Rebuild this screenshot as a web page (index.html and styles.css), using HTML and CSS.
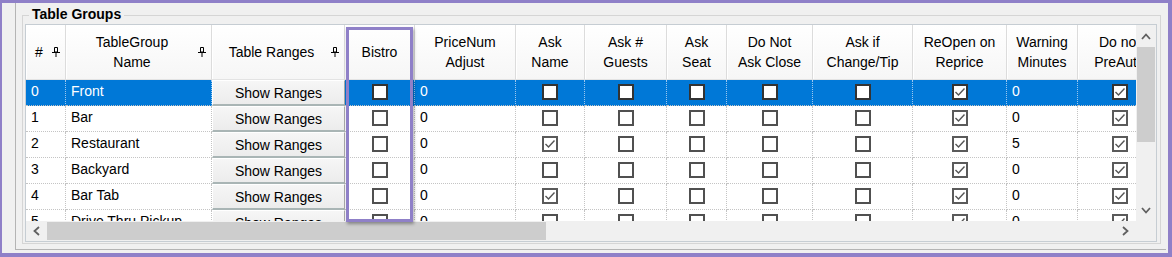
FILE: index.html
```html
<!DOCTYPE html>
<html>
<head>
<meta charset="utf-8">
<link rel="stylesheet" href="styles.css">
</head>
<body>
<div class="frame">
  <div class="panel">
    <div class="groupbox">
      <span class="gb-title">Table Groups</span>
      <div class="dgv">
        <div class="viewport">
          <div class="row cols header">
            <div class="hc"><span class="ht">#</span><svg class="pin" width="8" height="10" viewBox="0 0 8 10"><path d="M2.5 0.5h3v4.5h-3z M0 5.5h8 M4 5.5v4.5" stroke="#000" fill="none"/></svg></div>
            <div class="hc"><span class="ht">TableGroup<br>Name</span><svg class="pin" width="8" height="10" viewBox="0 0 8 10"><path d="M2.5 0.5h3v4.5h-3z M0 5.5h8 M4 5.5v4.5" stroke="#000" fill="none"/></svg></div>
            <div class="hc"><span class="ht">Table Ranges</span><svg class="pin" width="8" height="10" viewBox="0 0 8 10"><path d="M2.5 0.5h3v4.5h-3z M0 5.5h8 M4 5.5v4.5" stroke="#000" fill="none"/></svg></div>
            <div class="hc"><span class="ht">Bistro</span></div>
            <div class="hc"><span class="ht">PriceNum<br>Adjust</span></div>
            <div class="hc"><span class="ht">Ask<br>Name</span></div>
            <div class="hc"><span class="ht">Ask #<br>Guests</span></div>
            <div class="hc"><span class="ht">Ask<br>Seat</span></div>
            <div class="hc"><span class="ht">Do Not<br>Ask Close</span></div>
            <div class="hc"><span class="ht">Ask if<br>Change/Tip</span></div>
            <div class="hc"><span class="ht">ReOpen on<br>Reprice</span></div>
            <div class="hc"><span class="ht">Warning<br>Minutes</span></div>
            <div class="hc"><span class="ht">Do not<br>PreAuth</span></div>
          </div>

          <div class="row cols sel">
            <div class="c t">0</div><div class="c t">Front</div>
            <div class="c b"><div class="btn">Show Ranges</div></div>
            <div class="c k"><span class="cb"></span></div>
            <div class="c t">0</div>
            <div class="c k"><span class="cb"></span></div>
            <div class="c k"><span class="cb"></span></div>
            <div class="c k"><span class="cb"></span></div>
            <div class="c k"><span class="cb"></span></div>
            <div class="c k"><span class="cb"></span></div>
            <div class="c k"><span class="cb on"><svg width="12" height="12" viewBox="0 0 12 12"><path d="M1.5 6 L4.5 9 L10.5 2.5" stroke="#555" stroke-width="1.4" fill="none"/></svg></span></div>
            <div class="c t">0</div>
            <div class="c k"><span class="cb on"><svg width="12" height="12" viewBox="0 0 12 12"><path d="M1.5 6 L4.5 9 L10.5 2.5" stroke="#555" stroke-width="1.4" fill="none"/></svg></span></div>
          </div>

          <div class="row cols">
            <div class="c t">1</div><div class="c t">Bar</div>
            <div class="c b"><div class="btn">Show Ranges</div></div>
            <div class="c k"><span class="cb"></span></div>
            <div class="c t">0</div>
            <div class="c k"><span class="cb"></span></div>
            <div class="c k"><span class="cb"></span></div>
            <div class="c k"><span class="cb"></span></div>
            <div class="c k"><span class="cb"></span></div>
            <div class="c k"><span class="cb"></span></div>
            <div class="c k"><span class="cb on"><svg width="12" height="12" viewBox="0 0 12 12"><path d="M1.5 6 L4.5 9 L10.5 2.5" stroke="#555" stroke-width="1.4" fill="none"/></svg></span></div>
            <div class="c t">0</div>
            <div class="c k"><span class="cb on"><svg width="12" height="12" viewBox="0 0 12 12"><path d="M1.5 6 L4.5 9 L10.5 2.5" stroke="#555" stroke-width="1.4" fill="none"/></svg></span></div>
          </div>

          <div class="row cols">
            <div class="c t">2</div><div class="c t">Restaurant</div>
            <div class="c b"><div class="btn">Show Ranges</div></div>
            <div class="c k"><span class="cb"></span></div>
            <div class="c t">0</div>
            <div class="c k"><span class="cb on"><svg width="12" height="12" viewBox="0 0 12 12"><path d="M1.5 6 L4.5 9 L10.5 2.5" stroke="#555" stroke-width="1.4" fill="none"/></svg></span></div>
            <div class="c k"><span class="cb"></span></div>
            <div class="c k"><span class="cb"></span></div>
            <div class="c k"><span class="cb"></span></div>
            <div class="c k"><span class="cb"></span></div>
            <div class="c k"><span class="cb on"><svg width="12" height="12" viewBox="0 0 12 12"><path d="M1.5 6 L4.5 9 L10.5 2.5" stroke="#555" stroke-width="1.4" fill="none"/></svg></span></div>
            <div class="c t">5</div>
            <div class="c k"><span class="cb on"><svg width="12" height="12" viewBox="0 0 12 12"><path d="M1.5 6 L4.5 9 L10.5 2.5" stroke="#555" stroke-width="1.4" fill="none"/></svg></span></div>
          </div>

          <div class="row cols">
            <div class="c t">3</div><div class="c t">Backyard</div>
            <div class="c b"><div class="btn">Show Ranges</div></div>
            <div class="c k"><span class="cb"></span></div>
            <div class="c t">0</div>
            <div class="c k"><span class="cb"></span></div>
            <div class="c k"><span class="cb"></span></div>
            <div class="c k"><span class="cb"></span></div>
            <div class="c k"><span class="cb"></span></div>
            <div class="c k"><span class="cb"></span></div>
            <div class="c k"><span class="cb on"><svg width="12" height="12" viewBox="0 0 12 12"><path d="M1.5 6 L4.5 9 L10.5 2.5" stroke="#555" stroke-width="1.4" fill="none"/></svg></span></div>
            <div class="c t">0</div>
            <div class="c k"><span class="cb on"><svg width="12" height="12" viewBox="0 0 12 12"><path d="M1.5 6 L4.5 9 L10.5 2.5" stroke="#555" stroke-width="1.4" fill="none"/></svg></span></div>
          </div>

          <div class="row cols">
            <div class="c t">4</div><div class="c t">Bar Tab</div>
            <div class="c b"><div class="btn">Show Ranges</div></div>
            <div class="c k"><span class="cb"></span></div>
            <div class="c t">0</div>
            <div class="c k"><span class="cb on"><svg width="12" height="12" viewBox="0 0 12 12"><path d="M1.5 6 L4.5 9 L10.5 2.5" stroke="#555" stroke-width="1.4" fill="none"/></svg></span></div>
            <div class="c k"><span class="cb"></span></div>
            <div class="c k"><span class="cb"></span></div>
            <div class="c k"><span class="cb"></span></div>
            <div class="c k"><span class="cb"></span></div>
            <div class="c k"><span class="cb on"><svg width="12" height="12" viewBox="0 0 12 12"><path d="M1.5 6 L4.5 9 L10.5 2.5" stroke="#555" stroke-width="1.4" fill="none"/></svg></span></div>
            <div class="c t">0</div>
            <div class="c k"><span class="cb on"><svg width="12" height="12" viewBox="0 0 12 12"><path d="M1.5 6 L4.5 9 L10.5 2.5" stroke="#555" stroke-width="1.4" fill="none"/></svg></span></div>
          </div>

          <div class="row cols">
            <div class="c t">5</div><div class="c t">Drive Thru Pickup</div>
            <div class="c b"><div class="btn">Show Ranges</div></div>
            <div class="c k"><span class="cb"></span></div>
            <div class="c t">0</div>
            <div class="c k"><span class="cb"></span></div>
            <div class="c k"><span class="cb"></span></div>
            <div class="c k"><span class="cb"></span></div>
            <div class="c k"><span class="cb"></span></div>
            <div class="c k"><span class="cb"></span></div>
            <div class="c k"><span class="cb on"><svg width="12" height="12" viewBox="0 0 12 12"><path d="M1.5 6 L4.5 9 L10.5 2.5" stroke="#555" stroke-width="1.4" fill="none"/></svg></span></div>
            <div class="c t">0</div>
            <div class="c k"><span class="cb on"><svg width="12" height="12" viewBox="0 0 12 12"><path d="M1.5 6 L4.5 9 L10.5 2.5" stroke="#555" stroke-width="1.4" fill="none"/></svg></span></div>
          </div>
        </div>

        <div class="vscroll">
          <div class="arrow-v"><svg width="10" height="7" viewBox="0 0 10 7"><path d="M1 6 L5 1.5 L9 6" stroke="#606060" stroke-width="1.8" fill="none"/></svg></div>
          <div class="vthumb"></div>
          <div class="spacer"></div>
          <div class="arrow-v"><svg width="10" height="7" viewBox="0 0 10 7"><path d="M1 1 L5 5.5 L9 1" stroke="#606060" stroke-width="1.8" fill="none"/></svg></div>
        </div>
        <div class="hscroll">
          <div class="arrow-h"><svg width="7" height="10" viewBox="0 0 7 10"><path d="M6 1 L1.5 5 L6 9" stroke="#606060" stroke-width="1.8" fill="none"/></svg></div>
          <div class="hthumb"></div>
          <div class="spacer"></div>
          <div class="arrow-h r"><svg width="7" height="10" viewBox="0 0 7 10"><path d="M1 1 L5.5 5 L1 9" stroke="#606060" stroke-width="1.8" fill="none"/></svg></div>
        </div>
        <div class="corner"></div>
      </div>
    </div>
  </div>
  <div class="annot"></div>
</div>
</body>
</html>
```

FILE: styles.css
```css
html, body {
  margin: 0;
  padding: 0;
  background: #f0f0f0;
}
body {
  font-family: "Liberation Sans", Arial, sans-serif;
  font-size: 14px;
  color: #000;
}
.frame {
  position: relative;
  box-sizing: border-box;
  width: 1172px;
  height: 257px;
  border-style: solid;
  border-color: #8f80c8;
  border-width: 3px 4px 4px 2px;
  background: #f0f0f0;
  overflow: hidden;
}
.panel {
  margin-left: 13px;
  margin-right: 2px;
  border-left: 1px solid #b4b4b4;
  border-bottom: 1px solid #b4b4b4;
  padding: 12px 0 5px 6px;
}
.groupbox {
  position: relative;
  box-sizing: border-box;
  width: 1139px;
  height: 229px;
  border: 1px solid #d5d5d5;
  padding: 8px 0 0 2px;
}
.gb-title {
  position: absolute;
  top: -10px;
  left: 6px;
  padding: 0 3px;
  background: #f0f0f0;
  font-weight: bold;
  line-height: 16px;
}
.dgv {
  box-sizing: border-box;
  width: 1132px;
  height: 218px;
  border: 1px solid #c6cdd3;
  display: grid;
  grid-template-columns: 1110px 20px;
  grid-template-rows: 196px 20px;
  background: #fff;
}
.viewport {
  overflow: hidden;
  background: #fff;
}
.cols {
  display: grid;
  grid-template-columns: 40px 146px 133px 70px 101px 69px 82px 60px 86px 100px 94px 71px 84px;
}
.row {
  height: 26px;
  width: 1136px;
}
.header {
  height: 55px;
}
.hc {
  box-sizing: border-box;
  display: flex;
  align-items: center;
  background: linear-gradient(#ffffff, #f6f6f6);
  border-right: 1px solid #dcdcdc;
  border-bottom: 1px solid #e3e3e3;
  box-shadow: inset 1px 0 0 #ffffff;
  line-height: 20px;
  overflow: hidden;
  white-space: nowrap;
}
.ht {
  flex: 1;
  text-align: center;
}
.pin {
  flex: none;
  margin-right: 5px;
}
.c {
  box-sizing: border-box;
  height: 26px;
  border-right: 1px dotted #c4c4c4;
  border-bottom: 1px dotted #c4c4c4;
  overflow: hidden;
  white-space: nowrap;
}
.t {
  padding-left: 5px;
  line-height: 22px;
}
.k {
  display: flex;
  align-items: center;
  justify-content: center;
  padding-bottom: 1px;
}
.b {
  padding: 0;
  border: none;
  background: #fff;
}
.btn {
  box-sizing: border-box;
  height: 26px;
  background: linear-gradient(#f6f6f6, #ececec);
  border-top: 1px solid #ffffff;
  border-left: 1px solid #ffffff;
  border-right: 1px solid #a8a8a8;
  border-bottom: 2px solid #a9b5b5;
  text-align: center;
  line-height: 24px;
}
.cb {
  box-sizing: border-box;
  width: 16px;
  height: 16px;
  border: 2px solid #505050;
  background: #fff;
  display: flex;
  align-items: center;
  justify-content: center;
}
.cb.on {
  border-color: #5a5a5a;
}
.sel .c {
  background: #0078d7;
  color: #fff;
  border-right-color: #9cc7ee;
}
.sel .c.b {
  background: #fff;
  color: #000;
}
.sel .cb {
  border-color: #333;
}
.vscroll {
  background: #f0f0f0;
  display: flex;
  flex-direction: column;
}
.arrow-v {
  height: 22px;
  display: flex;
  align-items: center;
  justify-content: center;
}
.vthumb {
  height: 95px;
  margin: 0 1px;
  background: #cdcdcd;
}
.spacer {
  flex: 1;
}
.hscroll {
  background: #f0f0f0;
  display: flex;
}
.arrow-h {
  width: 20px;
  display: flex;
  align-items: center;
  justify-content: center;
}
.arrow-h.r {
  width: 22px;
}
.hthumb {
  width: 499px;
  margin: 1px 0 1px 1px;
  background: #cdcdcd;
}
.corner {
  background: #f0f0f0;
}
.annot {
  position: absolute;
  left: 344px;
  top: 24px;
  box-sizing: border-box;
  width: 67px;
  height: 195px;
  border: 3px solid #8f80c8;
  box-shadow: 1px 2px 3px rgba(0, 0, 0, 0.35);
}
```
